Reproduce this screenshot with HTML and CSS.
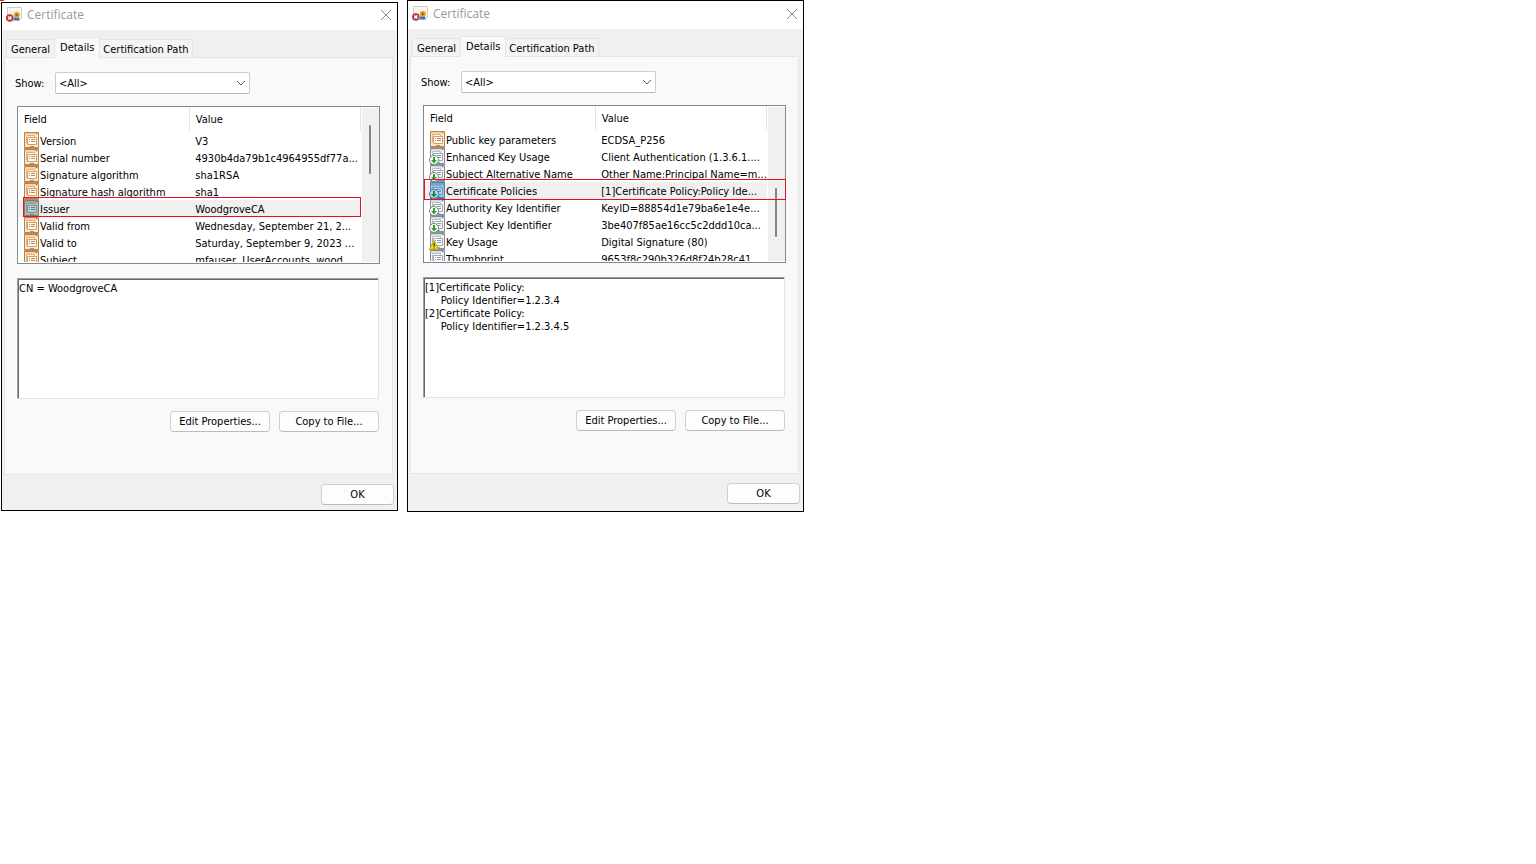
FILE: index.html
```html
<!DOCTYPE html>
<html lang="en">
<head>
<meta charset="utf-8">
<title>Certificate</title>
<link rel="stylesheet" href="styles.css">
</head>
<body>
<svg class="sprites" aria-hidden="true">
  <symbol id="i-cert" viewBox="0 0 16 16">
    <path d="M1.500 .5h14v11h-14z" fill="#faf8f0" stroke="#d5cdb8"/>
    <path d="M3 3h10v5H3z" fill="#f1f1f1"/>
    <path d="M9 9l-1.500 5 2-.8 1 .8.500-4zM12 9l2 5-1.500-.8-1.500.8-.5-4z" fill="#2d6fd0"/>
    <circle cx="10.800" cy="8" r="3" fill="#e0a21c"/>
    <circle cx="10.800" cy="8" r="1.200" fill="#9a6a08"/>
    <circle cx="3.800" cy="11" r="3.800" fill="#b5343a"/>
    <path d="M2.200 9.400l3.200 3.200m0-3.200l-3.200 3.200" stroke="#fff" stroke-width="1.400"/>
  </symbol>
  <symbol id="i-field" viewBox="0 0 15 17">
    <path d="M.5.5h14v15H.5z" fill="#ffe6cc" stroke="#b5834f"/>
    <path d="M1 1h13v2H1z" fill="#fdd0a4"/>
    <path d="M12 1h1v1h-1z" fill="#8a5a2c"/>
    <path d="M2.500 3.500h8v8h-8z" fill="#fff3e4" stroke="#dcb184"/>
    <path d="M3.500 5.500h9v7h-9z" fill="#fffaf2" stroke="#cfa06c"/>
    <path d="M5 7.500h1m1 0h4M5 9.500h1m1 0h4" stroke="#c08a55"/>
    <path d="M6 14h4v1H6z" fill="#b98a5a"/>
    <path d="M0 16h15v1H0z" fill="#b78d60"/>
  </symbol>
  <symbol id="i-field-on" viewBox="0 0 15 17">
    <path d="M.5.5h14v15H.5z" fill="#a9bcc4" stroke="#7c7d75"/>
    <path d="M1 1h13v2H1z" fill="#a4a9a2"/>
    <path d="M12 1h1v1h-1z" fill="#5c625c"/>
    <path d="M2.500 3.500h8v8h-8z" fill="#b0c6d0" stroke="#8f9a98"/>
    <path d="M3.500 5.500h9v7h-9z" fill="#b6d0dc" stroke="#858e88"/>
    <path d="M5 7.500h1m1 0h4M5 9.500h1m1 0h4" stroke="#737f80"/>
    <path d="M6 14h4v1H6z" fill="#7c817a"/>
    <path d="M0 16h15v1H0z" fill="#6d6a5c"/>
  </symbol>
  <symbol id="i-page" viewBox="0 0 15 17">
    <path d="M.5.5h14v15H.5z" fill="#f1f3f5" stroke="#858c94"/>
    <path d="M1 1h13v2H1z" fill="#d9dee2"/>
    <path d="M12 1h1v1h-1z" fill="#606870"/>
    <path d="M2.500 3.500h8v8h-8z" fill="#fff" stroke="#b9bfc6"/>
    <path d="M3.500 5.500h9v7h-9z" fill="#fff" stroke="#a0a7af"/>
    <path d="M7 7.500h4M7 9.500h4" stroke="#8d959e"/>
    <path d="M5 7.500h1M5 9.500h1" stroke="#35b4ee"/>
    <path d="M8 14h2v1H8z" fill="#46c4f4"/>
    <path d="M0 16h15v1H0z" fill="#90969c"/>
  </symbol>
  <symbol id="i-page-on" viewBox="0 0 15 17">
    <path d="M.5.5h14v15H.5z" fill="#9cc3e2" stroke="#4f7fa8"/>
    <path d="M1 1h13v2H1z" fill="#73a5cd"/>
    <path d="M2.500 3.500h8v8h-8z" fill="#a8cce8" stroke="#7ba7c9"/>
    <path d="M3.500 5.500h9v7h-9z" fill="#b3d4ec" stroke="#6796bb"/>
    <path d="M5 7.500h6M5 9.500h6" stroke="#5d8cb3"/>
    <path d="M8 14h2v1H8z" fill="#2cabef"/>
    <path d="M0 16h15v1H0z" fill="#477399"/>
  </symbol>
  <symbol id="i-down" viewBox="0 0 10 10">
    <circle cx="5" cy="5" r="4.500" fill="#fff" stroke="#7c8a7c"/>
    <path d="M4 2h2v3h2L5 8.500 2 5h2z" fill="#28a428"/>
  </symbol>
  <symbol id="i-down-on" viewBox="0 0 10 10">
    <circle cx="5" cy="5" r="4.500" fill="#b4d8e6" stroke="#4b7f96"/>
    <path d="M4 2h2v3h2L5 8.500 2 5h2z" fill="#168a50"/>
  </symbol>
  <symbol id="i-warn" viewBox="0 0 10 10">
    <path d="M5 .6L9.700 9.500H.3z" fill="#f7d818" stroke="#c29b08"/>
    <path d="M4.500 3.500h1.200v3H4.500zm0 4h1.200v1H4.500z" fill="#222"/>
  </symbol>
</svg>

<main class="desktop">
  <section class="dialog dialog-issuer" aria-label="Certificate issuer">
    <header class="titlebar">
      <svg class="title-icon" aria-hidden="true"><use href="#i-cert"/></svg>
      <h1 class="title">Certificate</h1>
      <button class="close" type="button" aria-label="Close"><svg viewBox="0 0 12 12" class="close-icon"><path d="M1 1l10 10M11 1L1 11"/></svg></button>
    </header>
    <nav class="tabs">
      <button class="tab" type="button">General</button>
      <button class="tab tab-active" type="button">Details</button>
      <button class="tab" type="button">Certification Path</button>
    </nav>
    <div class="panel">
      <div class="show-row">
        <label class="show-label" for="show-a">Show:</label>
        <div class="select-wrap">
          <select class="select" id="show-a"><option>&lt;All&gt;</option></select>
          <svg class="chevron" viewBox="0 0 10 6" aria-hidden="true"><path d="M1 1l4 4 4-4"/></svg>
        </div>
      </div>
      <div class="list">
        <div class="viewport">
          <table class="table">
            <thead><tr><th class="col-field">Field</th><th>Value</th></tr></thead>
            <tbody>
              <tr><td><span class="cell"><svg class="icon"><use href="#i-field"/></svg>Version</span></td><td>V3</td></tr>
              <tr><td><span class="cell"><svg class="icon"><use href="#i-field"/></svg>Serial number</span></td><td>4930b4da79b1c4964955df77a...</td></tr>
              <tr><td><span class="cell"><svg class="icon"><use href="#i-field"/></svg>Signature algorithm</span></td><td>sha1RSA</td></tr>
              <tr><td><span class="cell"><svg class="icon"><use href="#i-field"/></svg>Signature hash algorithm</span></td><td>sha1</td></tr>
              <tr class="selected"><td><span class="cell"><svg class="icon"><use href="#i-field-on"/></svg>Issuer</span></td><td>WoodgroveCA</td></tr>
              <tr><td><span class="cell"><svg class="icon"><use href="#i-field"/></svg>Valid from</span></td><td>Wednesday, September 21, 2...</td></tr>
              <tr><td><span class="cell"><svg class="icon"><use href="#i-field"/></svg>Valid to</span></td><td>Saturday, September 9, 2023 ...</td></tr>
              <tr><td><span class="cell"><svg class="icon"><use href="#i-field"/></svg>Subject</span></td><td>mfauser, UserAccounts, wood...</td></tr>
            </tbody>
          </table>
        </div>
        <div class="scrollbar"><div class="thumb thumb-upper"></div></div>
        <div class="mark mark-issuer"></div>
      </div>
      <textarea class="detail" aria-label="Field value" readonly>CN = WoodgroveCA</textarea>
      <div class="actions">
        <button class="button" type="button">Edit Properties...</button>
        <button class="button" type="button">Copy to File...</button>
      </div>
    </div>
    <footer class="footer"><button class="button button-ok" type="button">OK</button></footer>
    <span class="corner"></span>
  </section>

  <section class="dialog dialog-policies" aria-label="Certificate policies">
    <header class="titlebar">
      <svg class="title-icon" aria-hidden="true"><use href="#i-cert"/></svg>
      <h1 class="title">Certificate</h1>
      <button class="close" type="button" aria-label="Close"><svg viewBox="0 0 12 12" class="close-icon"><path d="M1 1l10 10M11 1L1 11"/></svg></button>
    </header>
    <nav class="tabs">
      <button class="tab" type="button">General</button>
      <button class="tab tab-active" type="button">Details</button>
      <button class="tab" type="button">Certification Path</button>
    </nav>
    <div class="panel">
      <div class="show-row">
        <label class="show-label" for="show-b">Show:</label>
        <div class="select-wrap">
          <select class="select" id="show-b"><option>&lt;All&gt;</option></select>
          <svg class="chevron" viewBox="0 0 10 6" aria-hidden="true"><path d="M1 1l4 4 4-4"/></svg>
        </div>
      </div>
      <div class="list">
        <div class="viewport">
          <table class="table">
            <thead><tr><th class="col-field">Field</th><th>Value</th></tr></thead>
            <tbody>
              <tr><td><span class="cell"><svg class="icon"><use href="#i-field"/></svg>Public key parameters</span></td><td>ECDSA_P256</td></tr>
              <tr><td><span class="cell"><svg class="icon"><use href="#i-page"/></svg><svg class="badge"><use href="#i-down"/></svg>Enhanced Key Usage</span></td><td>Client Authentication (1.3.6.1....</td></tr>
              <tr><td><span class="cell"><svg class="icon"><use href="#i-page"/></svg><svg class="badge"><use href="#i-down"/></svg>Subject Alternative Name</span></td><td>Other Name:Principal Name=m...</td></tr>
              <tr class="selected"><td><span class="cell"><svg class="icon"><use href="#i-page-on"/></svg><svg class="badge"><use href="#i-down-on"/></svg>Certificate Policies</span></td><td>[1]Certificate Policy:Policy Ide...</td></tr>
              <tr><td><span class="cell"><svg class="icon"><use href="#i-page"/></svg><svg class="badge"><use href="#i-down"/></svg>Authority Key Identifier</span></td><td>KeyID=88854d1e79ba6e1e4e...</td></tr>
              <tr><td><span class="cell"><svg class="icon"><use href="#i-page"/></svg><svg class="badge"><use href="#i-down"/></svg>Subject Key Identifier</span></td><td>3be407f85ae16cc5c2ddd10ca...</td></tr>
              <tr><td><span class="cell"><svg class="icon"><use href="#i-page"/></svg><svg class="badge"><use href="#i-warn"/></svg>Key Usage</span></td><td>Digital Signature (80)</td></tr>
              <tr><td><span class="cell"><svg class="icon"><use href="#i-page"/></svg>Thumbprint</span></td><td>9653f8c290b326d8f24b28c41...</td></tr>
            </tbody>
          </table>
        </div>
        <div class="scrollbar"><div class="thumb thumb-lower"></div></div>
        <div class="mark mark-policies"></div>
      </div>
      <textarea class="detail" aria-label="Field value" readonly>[1]Certificate Policy:
     Policy Identifier=1.2.3.4
[2]Certificate Policy:
     Policy Identifier=1.2.3.4.5</textarea>
      <div class="actions">
        <button class="button" type="button">Edit Properties...</button>
        <button class="button" type="button">Copy to File...</button>
      </div>
    </div>
    <footer class="footer"><button class="button button-ok" type="button">OK</button></footer>
  </section>
</main>
</body>
</html>
```
FILE: styles.css
```css
* { box-sizing: border-box; }
body {
  margin: 0;
  background: #fff;
  color: #000;
  font: 11px/13px Tahoma, "DejaVu Sans Condensed", "Noto Sans", sans-serif;
}
button, select, textarea { font: inherit; color: inherit; margin: 0; }
button { padding: 0; }
.sprites { position: absolute; width: 0; height: 0; }
.desktop { display: flex; align-items: flex-start; gap: 9px; padding-left: 1px; }
.dialog {
  position: relative;
  flex: 0 1 397px;
  min-width: 0;
  border: 1px solid #000;
  background: #f0f0f0;
}
.dialog-issuer { margin-top: 2px; }
.dialog-policies { padding-bottom: 2px; }
.titlebar {
  display: flex;
  align-items: center;
  gap: 5px;
  height: 27px;
  padding: 0 5px 3px 4px;
  background: #fff;
}
.dialog-policies .titlebar { height: 28px; }
.title-icon { width: 16px; height: 16px; }
.title { flex: 1; margin: 0; font: 12px/16px "Open Sans", "Noto Sans", sans-serif; color: #999; }
.close { display: flex; border: 0; background: none; }
.close-icon { width: 12px; height: 12px; fill: none; stroke: #8c8c8c; }
.tabs { display: flex; align-items: flex-end; height: 27px; padding: 0 4px; }
.tab {
  height: 18px;
  padding: 2px 4px 0;
  border: 1px solid #e5e5e5;
  border-width: 1px 1px 0 0;
  background: #f3f3f3;
  white-space: nowrap;
}
.tab:first-child { border-left-width: 1px; }
.tab-active {
  position: relative;
  height: 21px;
  margin-bottom: -1px;
  padding: 0 5px 1px;
  background: #f9f9f9;
}
.tab-active + .tab { padding: 2px 3px 0; }
.panel {
  margin: 0 4px 0 2px;
  padding: 14px 12px 42px;
  border: 1px solid #e5e5e5;
  background: #f9f9f9;
}
.show-row { display: flex; align-items: center; margin-left: -2px; }
.show-label { width: 40px; }
.select-wrap { position: relative; display: flex; flex: 0 1 195px; }
.select {
  flex: 1;
  height: 22px;
  padding: 0 3px;
  border: 1px solid #ccc;
  border-bottom-color: #b8b8b8;
  border-radius: 2px;
  background: #fff;
  appearance: none;
}
.chevron {
  position: absolute;
  right: 4px;
  top: 8px;
  width: 10px;
  height: 6px;
  fill: none;
  stroke: #606060;
}
.list {
  position: relative;
  display: flex;
  height: 158px;
  margin-top: 12px;
  padding: 0 0 1px;
  border: 1px solid #828790;
  background: #fff;
}
.viewport { flex: 1; min-width: 0; overflow: hidden; }
.table { width: 100%; border-collapse: collapse; table-layout: fixed; }
.table th {
  height: 25px;
  padding: 0 0 0 6px;
  border-right: 1px solid #e5e5e5;
  font-weight: normal;
  text-align: left;
}
.col-field { width: 50%; }
.table td { height: 17px; padding: 2px 0 0 6px; white-space: nowrap; }
.table td:first-child { padding-top: 0; }
.cell { position: relative; display: flex; align-items: center; gap: 1px; height: 17px; padding-top: 2px; }
.icon { flex: none; width: 15px; height: 17px; margin-top: -2px; }
.badge { position: absolute; left: -1px; bottom: 0; width: 10px; height: 10px; }
.selected { background: #f0f0f0; }
.scrollbar { width: 17px; margin: 1px 0 0 1px; padding-left: 7px; background: #f0f0f0; }
.thumb { width: 2px; height: 49px; border-radius: 1px; background: #858585; }
.thumb-upper { margin-top: 17px; }
.thumb-lower { margin-top: 81px; }
.mark { position: absolute; height: 20px; border: 1px solid #e81123; }
.mark-issuer { top: 90px; left: 5px; right: 18px; }
.mark-policies { top: 73px; left: 0; right: -1px; height: 21px; }
.detail {
  display: block;
  width: calc(100% - 1px);
  height: 121px;
  margin-top: 14px;
  padding: 3px 0 0 1px;
  border: 1px solid #e3e3e3;
  border-top-color: #a0a0a0;
  border-left-color: #a0a0a0;
  background: #fff;
  box-shadow: inset 1px 1px #696969;
  resize: none;
  outline: 0;
}
.actions { display: flex; justify-content: flex-end; gap: 9px; margin-top: 12px; padding-right: 1px; }
.button {
  width: 100px;
  height: 21px;
  border: 1px solid #d0d0d0;
  border-bottom-color: #bbb;
  border-radius: 4px;
  background: #fdfdfd;
}
.button-ok { width: 73px; }
.footer { display: flex; justify-content: flex-end; padding: 9px 3px 5px; }
.corner { position: absolute; left: -2px; top: -3px; width: 4px; height: 1px; background: #c8242c; }
```
